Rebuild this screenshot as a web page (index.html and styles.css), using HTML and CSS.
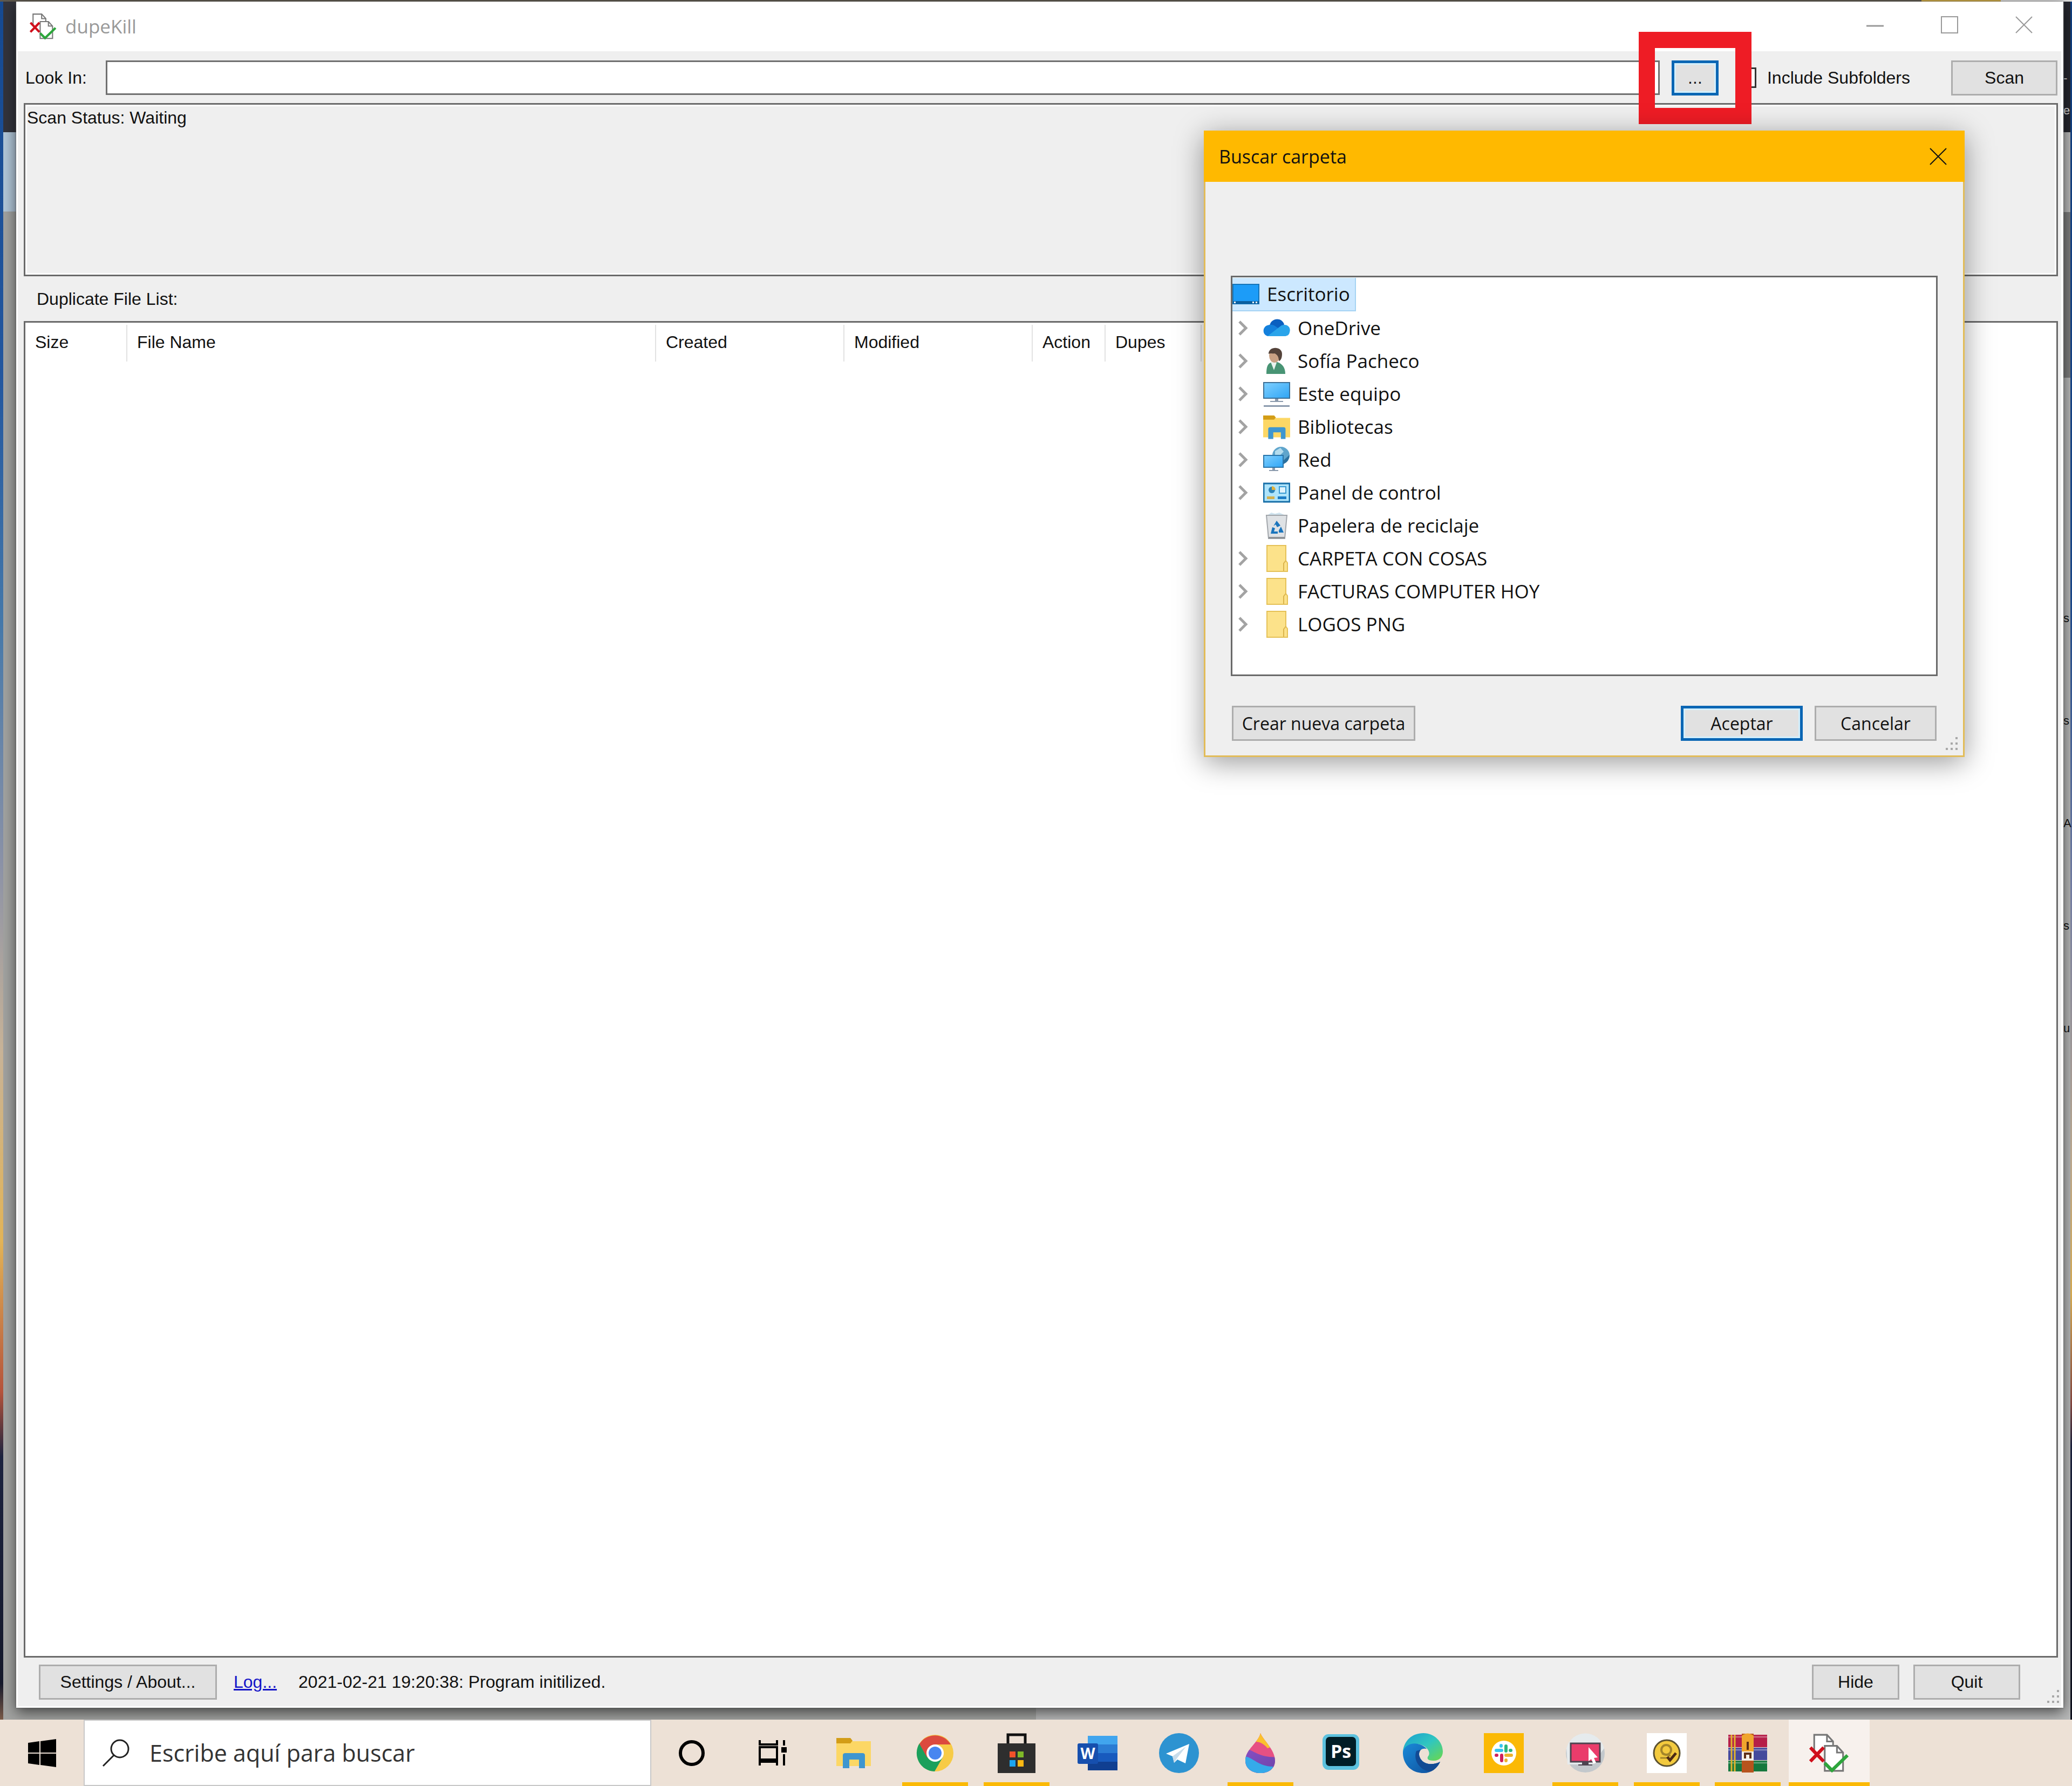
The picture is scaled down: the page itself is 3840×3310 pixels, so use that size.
FILE: index.html
```
<!DOCTYPE html>
<html lang="es">

<head>
    <meta charset="utf-8">
    <title>dupeKill</title>
    <link rel="stylesheet" href="styles.css">
</head>

<body>
    <svg class="defs" aria-hidden="true">
        <defs>
            <linearGradient id="screen" x1="0" y1="0" x2="1" y2="1">
                <stop offset="0" stop-color="#7fd0ff" />
                <stop offset="1" stop-color="#2fa5f5" />
            </linearGradient>
            <linearGradient id="drop" x1="0" y1="0" x2="1" y2="1">
                <stop offset="0" stop-color="#8a4fc4" />
                <stop offset="1" stop-color="#6a44a8" />
            </linearGradient>
            <linearGradient id="edge-top" x1="0" y1="0" x2="1" y2="1">
                <stop offset="0" stop-color="#1a9fd0" />
                <stop offset="0.5" stop-color="#30c6c0" />
                <stop offset="1" stop-color="#6cd84a" />
            </linearGradient>
            <linearGradient id="edge-side" x1="0" y1="0" x2="1" y2="1">
                <stop offset="0" stop-color="#1a8ad8" />
                <stop offset="1" stop-color="#0e4d9a" />
            </linearGradient>
            <clipPath id="drop-clip">
                <path d="M37 0C41 12 64 30 64 51C64 66 52 74 37 74C22 74 9 66 9 51C9 30 33 18 37 0Z" />
            </clipPath>
        </defs>
        <symbol id="dupekill" viewBox="0 0 72 72">
            <path d="M9 36V3H32L43 15V24" fill="#fff" stroke="#777" stroke-width="3" />
            <path d="M32 3V15H43" fill="none" stroke="#777" stroke-width="3" />
            <path d="M28 68V23H50L61 35V68Z" fill="#fff" stroke="#777" stroke-width="3" />
            <path d="M50 23V35H61" fill="none" stroke="#777" stroke-width="3" />
            <path d="M2 26L26 51M26 26L2 51" stroke="#d0101c" stroke-width="6" />
            <path d="M28 54L41 67L69 40" fill="none" stroke="#2da53c" stroke-width="6" />
        </symbol>
        <symbol id="chevron" viewBox="0 0 18 28">
            <path d="M2 2L14 14L2 26" fill="none" stroke="#a3a3a3" stroke-width="5" />
        </symbol>
        <symbol id="close" viewBox="0 0 32 32">
            <path d="M1 1L31 31M31 1L1 31" stroke="currentColor" stroke-width="2" />
        </symbol>
        <symbol id="folder" viewBox="0 0 50 50">
            <path d="M7 1H42V29L45 33V49H7Z" fill="#fce28a" stroke="#e5c157" stroke-width="2" />
            <path d="M38 48V34L42 29" fill="none" stroke="#dbb44c" stroke-width="2" />
        </symbol>
        <symbol id="explorer" viewBox="0 0 64 56">
            <path d="M0 0H24L30 6H64V52H0Z" fill="#fcd765" />
            <path d="M0 0H26L30 5L26 10H0Z" fill="#d39d17" />
            <path d="M12 56V32Q12 28 17 28H48Q53 28 53 32V56H42V40H24V56Z" fill="#3e96cf" />
        </symbol>
        <symbol id="grip" viewBox="0 0 26 26">
            <path d="M20 0h4v4h-4zM11 10h4v4h-4zM20 10h4v4h-4zM2 20h4v4H2zM11 20h4v4h-4zM20 20h4v4h-4z" fill="#a8a8a8" />
        </symbol>
    </svg>

    <div class="desktop">
        <div class="behind" aria-hidden="true">
            <span class="behind-title">-<br>e</span>
            <span>s</span>
            <span>s</span>
            <span>A</span>
            <span>s</span>
            <span>u</span>
        </div>

        <main class="window">
            <header class="titlebar">
                <svg class="app-icon"><use href="#dupekill" /></svg>
                <h1>dupeKill</h1>
                <div class="window-buttons">
                    <button type="button" aria-label="Minimize"><svg viewBox="0 0 32 32"><path d="M0 18H32" stroke="currentColor" stroke-width="3" /></svg></button>
                    <button type="button" aria-label="Maximize"><svg viewBox="0 0 32 32"><path d="M1 1H31V31H1Z" fill="none" stroke="currentColor" stroke-width="2" /></svg></button>
                    <button type="button" aria-label="Close"><svg><use href="#close" /></svg></button>
                </div>
            </header>

            <form class="search-row">
                <label for="look-in">Look In:</label>
                <input type="text" id="look-in" name="look_in">
                <div class="browse">
                    <button type="button" class="btn focused">...</button>
                </div>
                <div class="subfolders">
                    <input type="checkbox" id="subfolders" name="subfolders">
                    <label for="subfolders">Include Subfolders</label>
                </div>
                <button type="button" class="btn scan">Scan</button>
            </form>

            <div class="status">Scan Status: Waiting</div>
            <h2>Duplicate File List:</h2>

            <div class="file-list">
                <table>
                    <colgroup>
                        <col class="col-size">
                        <col class="col-name">
                        <col class="col-date">
                        <col class="col-date">
                        <col class="col-action">
                        <col class="col-dupes">
                        <col>
                    </colgroup>
                    <thead>
                        <tr>
                            <th>Size</th>
                            <th>File Name</th>
                            <th>Created</th>
                            <th>Modified</th>
                            <th>Action</th>
                            <th>Dupes</th>
                            <td></td>
                        </tr>
                    </thead>
                </table>
            </div>

            <footer class="bottom-row">
                <button type="button" class="btn settings">Settings / About...</button>
                <a href="#log">Log...</a>
                <span>2021-02-21 19:20:38: Program initilized.</span>
                <div class="exit-buttons">
                    <button type="button" class="btn hide">Hide</button>
                    <button type="button" class="btn quit">Quit</button>
                </div>
                <svg class="grip"><use href="#grip" /></svg>
            </footer>

            <section class="dialog" role="dialog" aria-labelledby="dialog-title">
                <header>
                    <h2 id="dialog-title">Buscar carpeta</h2>
                    <button type="button" aria-label="Cerrar"><svg><use href="#close" /></svg></button>
                </header>
                <div class="dialog-body">
                    <ul class="tree">
                        <li class="root">
                            <span class="selected">
                                <svg class="icon" viewBox="0 0 50 50"><path d="M1 7H49V43H1Z" fill="#1c9cf8" stroke="#1675b8" stroke-width="2" /><path d="M1 38H49V43H1Z" fill="#0c5f9e" /><path d="M3 39h3v3H3zM37 39h3v3h-3zM43 39h3v3h-3z" fill="#fff" /></svg>
                                Escritorio
                            </span>
                        </li>
                        <li>
                            <svg class="chevron"><use href="#chevron" /></svg>
                            <svg class="icon" viewBox="0 0 50 50"><path d="M12 20C15 6 34 4 39 18L30 30L6 26Z" fill="#0b5fc0" /><path d="M11 40C-3 40-3 20 12 19C20 18 24 23 30 27L22 40Z" fill="#1480dc" /><path d="M8 40L34 20C45 16 52 24 49 33C48 38 44 40 40 40Z" fill="#2aa4ea" /></svg>
                            OneDrive
                        </li>
                        <li>
                            <svg class="chevron"><use href="#chevron" /></svg>
                            <svg class="icon" viewBox="0 0 50 50"><path d="M6 49C6 36 8 28 18 27H26C36 30 41 38 41 49Z" fill="#489474" /><path d="M14 27L20 42L25 28L20 24Z" fill="#e8f3ee" /><ellipse cx="21" cy="15" rx="10" ry="13" fill="#c9a184" /><path d="M10 12C10-3 35-3 35 12C35 22 31 25 29 25C29 17 26 13 21 11C16 12 13 10 10 12Z" fill="#54433a" /></svg>
                            Sofía Pacheco
                        </li>
                        <li>
                            <svg class="chevron"><use href="#chevron" /></svg>
                            <svg class="icon" viewBox="0 0 50 50"><path d="M1 4H49V33H1Z" fill="url(#screen)" stroke="#3b6f96" stroke-width="2" /><path d="M22 34H28V38H37V40H13V38H22ZM1 46H49V49H1Z" fill="#8a99ac" /></svg>
                            Este equipo
                        </li>
                        <li>
                            <svg class="chevron"><use href="#chevron" /></svg>
                            <svg class="icon" viewBox="0 -3 64 60"><use href="#explorer" width="64" height="56" /></svg>
                            Bibliotecas
                        </li>
                        <li>
                            <svg class="chevron"><use href="#chevron" /></svg>
                            <svg class="icon" viewBox="0 0 50 50"><circle cx="33" cy="17" r="16" fill="#5fa5cc" /><path d="M22 9L32 3L38 10L31 17L22 16Z" fill="#b4dced" /><path d="M38 26L49 16Q48 29 38 33Z" fill="#2b709e" /><path d="M1 17H37V39H1Z" fill="url(#screen)" stroke="#2975aa" stroke-width="2" /><path d="M17 40H22V44H28V46H11V44H17Z" fill="#8a99ac" /></svg>
                            Red
                        </li>
                        <li>
                            <svg class="chevron"><use href="#chevron" /></svg>
                            <svg class="icon" viewBox="0 0 50 50"><path d="M1 8H49V42H1Z" fill="#aee4fb" stroke="#176fa8" stroke-width="3" /><circle cx="16" cy="20" r="6" fill="#2b83b8" /><path d="M16 20V13A7 7 0 0 1 23 20Z" fill="#e0b13c" /><path d="M30 14H42V26H30Z" fill="#dff3fc" stroke="#3a9bd3" stroke-width="2" /><path d="M7 32H21V37H7Z" fill="#d3b04e" /><path d="M27 32H43V37H27Z" fill="#1d7dc6" /></svg>
                            Panel de control
                        </li>
                        <li>
                            <span class="chevron"></span>
                            <svg class="icon" viewBox="0 0 50 50"><path d="M9 5L15 1L22 3L30 1L41 6V9H9Z" fill="#cfe3ee" /><path d="M6 6H44L40 49H10Z" fill="#dfe2e5" stroke="#a2a6ab" stroke-width="2" /><path d="M10 46H40V49H10Z" fill="#8e9296" /><path d="M25 16L32 25L26 28L23 23L19 26ZM17 28L22 30L20 36H27V40H14ZM33 27L38 38H29V34Z" fill="#1b75bd" /></svg>
                            Papelera de reciclaje
                        </li>
                        <li>
                            <svg class="chevron"><use href="#chevron" /></svg>
                            <svg class="icon"><use href="#folder" /></svg>
                            CARPETA CON COSAS
                        </li>
                        <li>
                            <svg class="chevron"><use href="#chevron" /></svg>
                            <svg class="icon"><use href="#folder" /></svg>
                            FACTURAS COMPUTER HOY
                        </li>
                        <li>
                            <svg class="chevron"><use href="#chevron" /></svg>
                            <svg class="icon"><use href="#folder" /></svg>
                            LOGOS PNG
                        </li>
                    </ul>
                    <div class="dialog-buttons">
                        <button type="button" class="btn new-folder">Crear nueva carpeta</button>
                        <button type="button" class="btn focused">Aceptar</button>
                        <button type="button" class="btn">Cancelar</button>
                    </div>
                </div>
                <svg class="grip"><use href="#grip" /></svg>
            </section>
        </main>
    </div>

    <nav class="taskbar">
        <button type="button" class="start" aria-label="Inicio">
            <svg viewBox="0 0 52 52"><path d="M0 7L21 4V25H0ZM23 4L52 0V25H23ZM0 27H21V48L0 45ZM23 27H52V52L23 48Z" /></svg>
        </button>
        <div class="search">
            <svg viewBox="0 0 52 52"><circle cx="33" cy="18" r="16" fill="none" stroke="#222" stroke-width="3" /><path d="M22 30L2 50" stroke="#222" stroke-width="3" /></svg>
            <input type="text" aria-label="Buscar" placeholder="Escribe aquí para buscar">
        </div>
        <div class="system">
            <button type="button" aria-label="Cortana">
                <svg viewBox="0 0 74 74"><circle cx="37" cy="37" r="21" fill="none" stroke="#000" stroke-width="6" /></svg>
            </button>
            <button type="button" aria-label="Vista de tareas">
                <svg viewBox="0 0 74 74"><path d="M13 13V21H45V13M13 26H45V49H13ZM13 60V53H45V60M58 13V23M58 39V60" fill="none" stroke="#000" stroke-width="4" /><path d="M53 26H63V36H53Z" /></svg>
            </button>
        </div>
        <div class="apps">
            <button type="button" aria-label="Explorador">
                <svg viewBox="0 0 74 74"><use href="#explorer" x="5" y="9" width="64" height="56" /></svg>
            </button>
            <button type="button" class="running" aria-label="Chrome">
                <svg viewBox="0 0 74 74"><circle cx="37" cy="37" r="34" fill="#f7cb46" /><path d="M37 37L8 19A34 34 0 0 0 36 71L51 45Z" fill="#1ba05c" /><path d="M37 37L22 45L8 20A34 34 0 0 1 66 21H37Z" fill="#dc4a3e" /><circle cx="37" cy="37" r="16" fill="#fff" /><circle cx="37" cy="37" r="12" fill="#4886f0" /></svg>
            </button>
            <button type="button" class="running" aria-label="Store">
                <svg viewBox="0 0 74 74"><path d="M21 22V3H53V22" fill="none" stroke="#111" stroke-width="5" /><path d="M2 19H72V74H2Z" fill="#2e2e2e" /><path d="M24 34H35V45H24Z" fill="#f1512a" /><path d="M39 34H50V45H39Z" fill="#7fb928" /><path d="M24 50H35V62H24Z" fill="#1ca5ee" /><path d="M39 50H50V62H39Z" fill="#fdb913" /></svg>
            </button>
            <button type="button" aria-label="Word">
                <svg viewBox="0 0 74 74"><path d="M19 5H74V21H19Z" fill="#41a5ee" /><path d="M19 21H74V37H19Z" fill="#2b7cd3" /><path d="M19 37H74V53H19Z" fill="#185abd" /><path d="M19 53H74V69H19Z" fill="#103f91" /><rect y="19" width="38" height="38" rx="3" fill="#164fae" /><text x="19" y="48" class="letter" font-size="28">W</text></svg>
            </button>
            <button type="button" aria-label="Telegram">
                <svg viewBox="0 0 74 74"><circle cx="37" cy="37" r="37" fill="#2d93d1" /><path d="M13 38L56 20L49 56L34 49L28 55L25 43Z" fill="#fff" /><path d="M25 43L50 25L33 47L28 55Z" fill="#c8dcea" /></svg>
            </button>
            <button type="button" class="running" aria-label="Paint 3D">
                <svg viewBox="0 0 74 74"><g clip-path="url(#drop-clip)"><path d="M0 0H74V74H0Z" fill="#e65083" /><path d="M20 18C30 13 42 18 50 28L74 20V0H20Z" fill="#fbc02d" /><path d="M0 28C22 26 30 48 74 44V74H0Z" fill="url(#drop)" /><path d="M0 43C22 40 28 61 60 62V74H0Z" fill="#35aaea" /></g></svg>
            </button>
            <button type="button" aria-label="Photoshop">
                <svg viewBox="0 0 74 74"><rect x="2" y="2" width="68" height="66" rx="11" fill="#5cc1de" /><rect x="8" y="7" width="56" height="54" rx="7" fill="#001d26" /><text x="36" y="46" class="letter" font-size="34">Ps</text></svg>
            </button>
            <button type="button" aria-label="Edge">
                <svg viewBox="0 0 74 74"><path d="M0 34C2 14 17 0 38 0C59 0 74 17 74 34C74 45 66 52 56 51C46 51 43 47 48 41C51 34 44 23 28 20C14 19 4 25 0 34Z" fill="url(#edge-top)" /><path d="M0 34C3 23 16 17 28 20C41 23 46 31 43 29C32 27 28 36 31 44C36 58 54 61 69 53C63 66 52 74 39 74C13 74-1 55 0 34Z" fill="url(#edge-side)" /><path d="M25 33C18 50 32 70 51 71C59 68 65 62 69 53C54 61 36 58 31 44C29 39 30 35 33 31Z" fill="#124a94" /></svg>
            </button>
            <button type="button" aria-label="Slack">
                <svg viewBox="0 0 74 74"><path d="M0 0H74V74H0Z" fill="#fbb905" /><circle cx="37" cy="37" r="23" fill="#fff" /><g fill="none" stroke-width="6" stroke-linecap="round"><path d="M33 32H23M32 24V23" stroke="#36c5f0" /><path d="M41 33V24M49 32H50" stroke="#2eb67d" /><path d="M41 41H51M41 50V51" stroke="#ecb22e" /><path d="M33 41V51M24 41H23" stroke="#d0215c" /></g></svg>
            </button>
            <button type="button" class="running" aria-label="Capturas">
                <svg viewBox="0 0 74 74"><circle cx="37" cy="37" r="36" fill="#c3c8cc" /><path d="M2 28A36 36 0 0 1 72 28L50 58H4Z" fill="#e6ebed" /><path d="M10 19H64V53H10Z" fill="#ea3c6b" stroke="#4d4450" stroke-width="3" /><path d="M31 54H43V58H50V60H24V58H31Z" fill="#4d4450" /><path d="M43 26L60 45L53 46L57 55L52 57L48 48L43 52Z" fill="#fff" /></svg>
            </button>
            <button type="button" class="running" aria-label="Verificador">
                <svg viewBox="0 0 74 74"><path d="M0 0H74V74H0Z" fill="#fff" /><circle cx="37" cy="37" r="24" fill="#f3ca3e" stroke="#5c5230" stroke-width="3" /><circle cx="36" cy="31" r="9" fill="none" stroke="#a3852a" stroke-width="4" /><path d="M25 46H41M28 38L44 42" stroke="#a3852a" stroke-width="3" /><path d="M38 44L43 50L54 37" fill="none" stroke="#4c2a14" stroke-width="5" /></svg>
            </button>
            <button type="button" class="running" aria-label="WinRAR">
                <svg viewBox="0 0 74 74"><path d="M1 3H73V26H1Z" fill="#b51e48" /><path d="M1 27H73V50H1Z" fill="#454a9c" /><path d="M1 51H73V71H1Z" fill="#16783d" /><path d="M1 7H73M1 31H73M1 55H73" stroke="#fff" stroke-opacity="0.3" stroke-width="3" /><path d="M7 3V71M13 3V71" stroke="#e2b32d" stroke-width="3" /><path d="M26 1H48V73H26Z" fill="#b7541d" /><path d="M26 5Q37-4 48 5V34H26Z" fill="#f0a52e" /><path d="M26 34H48V51H26Z" fill="#f4f0e8" /><path d="M32 47V38H42V47M37 16V31" fill="none" stroke="#5e2e16" stroke-width="4" /></svg>
            </button>
            <button type="button" class="running active" aria-label="dupeKill">
                <svg><use href="#dupekill" /></svg>
            </button>
        </div>
    </nav>
</body>

</html>
```

FILE: styles.css
```
* {
    box-sizing: border-box;
}

body {
    margin: 0;
    height: 100vh;
    display: flex;
    flex-direction: column;
    overflow: hidden;
    font-family: "Liberation Sans", Arial, sans-serif;
    font-size: 32px;
    line-height: 40px;
    color: #111;
}

button,
input {
    font: inherit;
    color: inherit;
}

button {
    border: none;
    padding: 0;
    background: none;
}

h1,
h2 {
    margin: 0;
    font-size: inherit;
    font-weight: normal;
}

.defs {
    position: absolute;
    width: 0;
    height: 0;
}

/* wallpaper edges and the window left open behind */
.desktop {
    flex: 1;
    min-height: 0;
    display: flex;
    position: relative;
    overflow: hidden;
    padding: 3px 16px 22px 30px;
    background:
        linear-gradient(to right, transparent 3561px, #d5ae45 3561px, #d5ae45 3708px, #e0e0e0 3708px) top / 100% 3px no-repeat,
        linear-gradient(#5f594e, #5f594e) top / 100% 3px no-repeat,
        linear-gradient(#164a92 0, #2458a0 700px, #4579ab 1150px, #8c93a8 1600px, #c9b498 1950px, #e3b558 2300px, #b6543c 2580px, #1d2440 2700px, #161a2c 3120px, #7a5a48 3187px) left / 6px 100% no-repeat,
        linear-gradient(#124284 0, #1c4c92 1100px, #7b86ad 1650px, #c9b498 2150px, #e3b558 2400px, #8c4c44 2600px, #1d2440 2680px, #11131f 3187px) right / 3px 100% no-repeat,
        linear-gradient(#33343c 245px, #b1c6d8 245px, #b1c6d8 392px, #a2a3a1 392px) left / 50% 100% no-repeat,
        linear-gradient(#26272f 245px, #b9b9b9 245px, #b9b9b9 393px, #7e7e7e 393px, #7e7e7e 700px, #b8b9b9 700px) right / 50% 100% no-repeat;
}

.behind {
    position: absolute;
    top: 0;
    right: 0;
    bottom: 0;
    width: 16px;
    overflow: hidden;
    display: flex;
    flex-direction: column;
    font-size: 22px;
    line-height: 190px;
}

.behind-title {
    height: 1051px;
    padding-top: 115px;
    line-height: 60px;
    color: #e4e4e4;
}

.window {
    flex: 1;
    display: flex;
    flex-direction: column;
    position: relative;
    background: #efefef;
    border: solid #fff;
    border-width: 0 4px 3px 3px;
    box-shadow: 0 0 3px #555, 0 8px 24px rgba(0, 0, 0, 0.6);
}

.titlebar {
    flex: none;
    display: flex;
    align-items: center;
    height: 92px;
    padding-left: 22px;
    background: #fff;
    color: #999;
    font-family: "Open Sans", "Noto Sans", sans-serif;
    font-size: 35px;
}

.app-icon {
    width: 50px;
    height: 50px;
    margin-right: 16px;
}

.window-buttons {
    display: flex;
    height: 86px;
    margin-left: auto;
    align-self: flex-start;
}

.window-buttons button {
    width: 138px;
}

.window-buttons svg,
.dialog header svg {
    display: block;
    width: 32px;
    height: 32px;
    margin: auto;
}

.search-row {
    flex: none;
    display: flex;
    align-items: center;
    height: 96px;
    padding: 6px 7px 4px 14px;
}

#look-in {
    flex: 1;
    height: 64px;
    margin: 0 22px 0 32px;
    padding: 0 8px;
    border: 3px solid #707070;
    background: #fff;
}

.search-row > label {
    width: 117px;
    white-space: nowrap;
}

.btn {
    height: 65px;
    border: 3px solid #adadad;
    background: #e1e1e1;
    white-space: nowrap;
}

.btn.focused {
    border: 5px solid #0a66b4;
    box-shadow: inset 0 0 0 3px #d3effc;
}

/* red marker drawn round the browse button */
.browse {
    position: relative;
}

.browse .btn {
    display: block;
    width: 87px;
}

.browse::after {
    content: "";
    position: absolute;
    inset: -53px -61px;
    border: 30px solid #ee1c25;
}

.subfolders {
    display: flex;
    align-items: center;
    margin-left: 40px;
}

.subfolders input {
    appearance: none;
    width: 30px;
    height: 38px;
    margin: 0 20px 0 0;
    border: 3px solid #333;
    background: #fff;
}

.scan {
    width: 197px;
    margin-left: 76px;
}

.status {
    flex: none;
    height: 321px;
    margin: 0 6px 0 11px;
    padding: 4px 0 0 3px;
    border: 3px solid #6a6a6a;
    box-shadow: inset 0 0 0 3px #fff;
}

.window > h2 {
    flex: none;
    padding: 22px 0 21px 35px;
}

.file-list {
    flex: 1;
    margin: 0 6px 0 11px;
    border: 3px solid #6a6a6a;
    background: #fff;
}

.file-list table {
    width: 100%;
    margin-top: 4px;
    table-layout: fixed;
    border-collapse: collapse;
}

.file-list th {
    height: 68px;
    padding: 0 0 4px 18px;
    border-right: 2px solid #e2e2e2;
    font-weight: normal;
    text-align: left;
}

.col-size {
    width: 188px;
}

.col-name {
    width: 980px;
}

.col-date {
    width: 349px;
}

.col-action {
    width: 135px;
}

.col-dupes {
    width: 178px;
}

.bottom-row {
    flex: none;
    display: flex;
    align-items: center;
    position: relative;
    height: 90px;
    padding: 0 76px 0 39px;
}

.bottom-row a {
    margin: 0 40px 0 31px;
    color: #1414c8;
}

.settings {
    width: 330px;
}

.exit-buttons {
    display: flex;
    gap: 26px;
    margin-left: auto;
}

.hide {
    width: 162px;
}

.quit {
    width: 198px;
}

.grip {
    position: absolute;
    right: 2px;
    bottom: 4px;
    width: 26px;
    height: 26px;
}

.dialog {
    position: absolute;
    top: 239px;
    right: 179px;
    width: 1410px;
    border: 3px solid #e2bc58;
    background: #efefef;
    box-shadow: 0 10px 50px rgba(0, 0, 0, 0.4);
    font-family: "Open Sans", "Noto Sans", sans-serif;
}

.dialog header {
    display: flex;
    align-items: center;
    justify-content: space-between;
    height: 95px;
    margin: -3px -3px 0;
    padding: 0 33px 0 28px;
    background: #ffb900;
    font-size: 34px;
}

.dialog-body {
    padding: 174px 47px 27px;
}

.dialog .grip {
    right: 8px;
    bottom: 8px;
}

.tree {
    min-height: 742px;
    margin: 0;
    padding: 0;
    border: 3px solid #6a6a6a;
    background: #fff;
    font-size: 35px;
    list-style: none;
}

.tree li {
    display: flex;
    align-items: center;
    height: 61px;
    padding-left: 11px;
}

.tree .root {
    height: 63px;
    padding-left: 0;
}

.selected {
    display: flex;
    align-items: center;
    height: 62px;
    padding-right: 9px;
    border: solid #a5d3f3;
    border-width: 0 2px 2px 0;
    background: #cce8ff;
}

.chevron {
    width: 18px;
    height: 28px;
    margin-right: 28px;
}

.icon {
    width: 50px;
    height: 50px;
    margin-right: 14px;
}

.dialog-buttons {
    display: flex;
    gap: 22px;
    padding: 55px 2px 0;
}

.dialog-buttons .btn {
    width: 226px;
}

.dialog-buttons .new-folder {
    width: 340px;
    margin-right: auto;
}

.taskbar {
    flex: none;
    display: flex;
    height: 123px;
    background: #ede1d6;
}

.start {
    width: 155px;
}

.search {
    display: flex;
    align-items: center;
    width: 1052px;
    padding-left: 32px;
    border: 2px solid #c8c8c8;
    background: #fff;
    font-family: "Open Sans", "Noto Sans", sans-serif;
    font-size: 43px;
}

.search input {
    flex: 1;
    border: none;
    padding: 0;
    background: none;
}

.search input::placeholder {
    color: #333;
    opacity: 1;
}

.system {
    display: flex;
    width: 300px;
}

.system button {
    flex: 1;
}

.apps {
    display: grid;
    grid-template-columns: repeat(13, 1fr);
    width: 51%;
}

.taskbar svg {
    display: block;
    width: 52px;
    height: 52px;
    margin: auto;
}

.taskbar .search svg {
    margin: 0 36px 0 0;
}

.taskbar .system svg,
.taskbar .apps svg {
    width: 74px;
    height: 74px;
}

.running {
    background: linear-gradient(#fbb905, #fbb905) bottom / 122px 7px no-repeat;
}

.active {
    background: linear-gradient(#fbb905, #fbb905) bottom / 100% 7px no-repeat #f7f1ed;
}

.letter {
    fill: #fff;
    font-family: "Open Sans", sans-serif;
    font-weight: bold;
    text-anchor: middle;
}
```
